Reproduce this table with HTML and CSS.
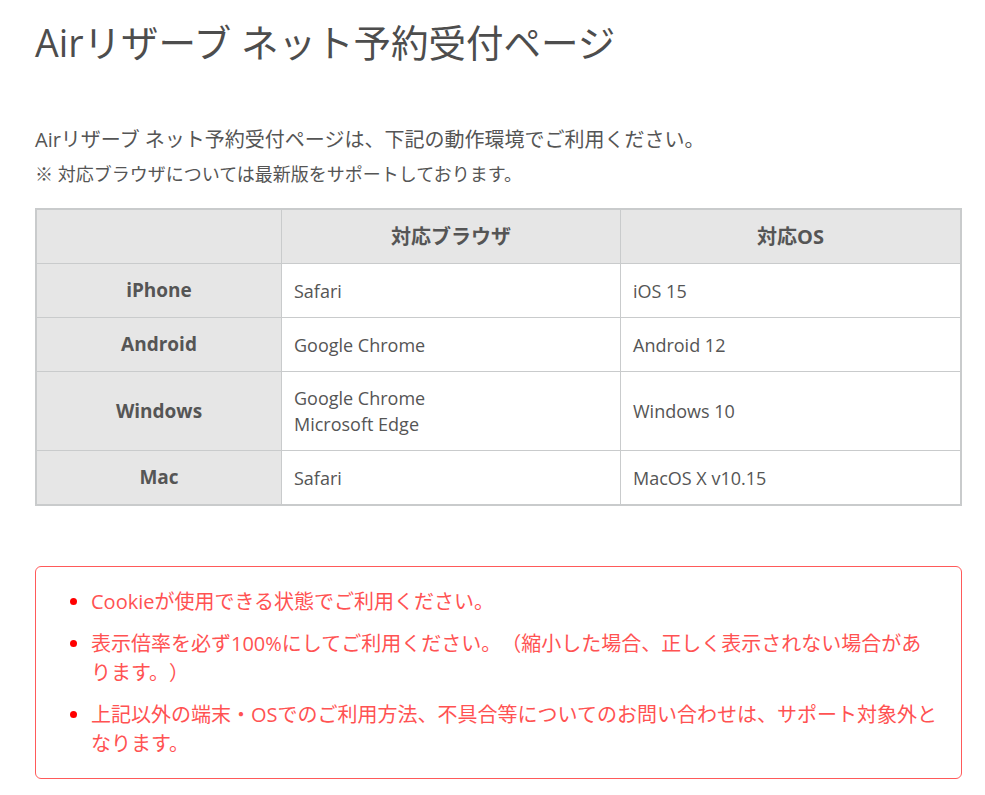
FILE: index.html
```html
<!DOCTYPE html>
<html lang="ja">
<head>
  <meta charset="UTF-8">
  <title>動作環境</title>
  <link rel="stylesheet" href="styles.css">
</head>
<body>
  <div class="wrap">
    <h1 class="title">Airリザーブ ネット予約受付ページ</h1>

    <p class="lead">Airリザーブ ネット予約受付ページは、下記の動作環境でご利用ください。</p>
    <p class="note">※ 対応ブラウザについては最新版をサポートしております。</p>

    <table class="env">
      <tr class="head">
        <th class="blank"></th>
        <th class="col-browser">対応ブラウザ</th>
        <th>対応OS</th>
      </tr>
      <tr>
        <th>iPhone</th>
        <td>Safari</td>
        <td>iOS 15</td>
      </tr>
      <tr>
        <th>Android</th>
        <td>Google Chrome</td>
        <td>Android 12</td>
      </tr>
      <tr>
        <th>Windows</th>
        <td>Google Chrome<br>Microsoft Edge</td>
        <td>Windows 10</td>
      </tr>
      <tr>
        <th>Mac</th>
        <td>Safari</td>
        <td>MacOS X v10.15</td>
      </tr>
    </table>

    <div class="caution">
      <ul>
        <li>Cookieが使用できる状態でご利用ください。</li>
        <li>表示倍率を必ず100%にしてご利用ください。（縮小した場合、正しく表示されない場合があります。）</li>
        <li>上記以外の端末・OSでのご利用方法、不具合等についてのお問い合わせは、サポート対象外となります。</li>
      </ul>
    </div>
  </div>
</body>
</html>
```

FILE: styles.css
```css
html,
body {
  margin: 0;
  padding: 0;
  background-color: #fff;
}

body {
  font-family: "Open Sans", "Noto Sans CJK JP", sans-serif;
  color: #555;
  text-spacing-trim: space-all;
}

.wrap {
  width: 927px;
  margin-left: 35px;
}

.title {
  margin: 0;
  padding-top: 18px;
  font-size: 37.5px;
  font-weight: normal;
  line-height: 50px;
  color: #4d4d4d;
}

.lead {
  margin: 57px 0 0;
  font-size: 20px;
  line-height: 30px;
}

.note {
  margin: 5px 0 0;
  font-size: 18px;
  line-height: 28px;
}

.env {
  width: 100%;
  margin-top: 20px;
  border-collapse: collapse;
  border: 2px solid #c9cbcc;
  font-size: 18px;
}

.env th,
.env td {
  border: 1px solid #c9cbcc;
  line-height: 27px;
  padding: 13px 12px 13px;
  text-align: left;
  font-weight: normal;
}

.env td {
  line-height: 26px;
}

.env th {
  background-color: #e6e6e6;
  text-align: center;
  font-weight: bold;
  font-size: 19px;
  width: 220px;
}

.env .head th {
  font-size: 20px;
}

.env th.col-browser {
  width: 314px;
}

.env th:last-child {
  width: auto;
}

.caution {
  margin-top: 60px;
  border: 1px solid #ff5a5a;
  border-radius: 6px;
  padding: 20px 20px 20px 35px;
}

.caution ul {
  margin: 0;
  padding: 0 0 0 20px;
}

.caution li {
  font-size: 20px;
  line-height: 29px;
  margin-bottom: 13px;
  color: #ff5252;
}

.caution li:last-child {
  margin-bottom: 0;
}

.caution li::marker {
  color: #f00;
}
```
